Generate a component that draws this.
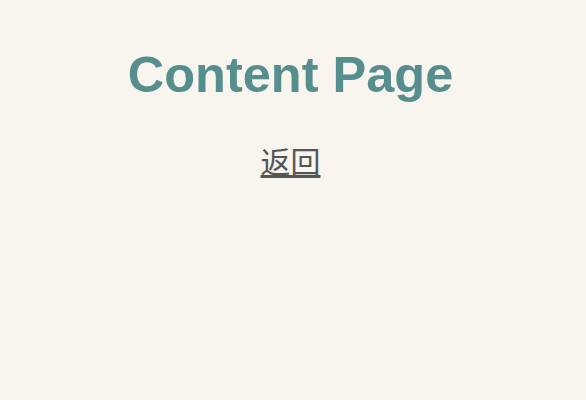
import React from 'react';

const App = () => {
  return (
    <div className="min-h-screen bg-[#f8f5ef] text-center pt-[46px] pr-[5px]" style={{ fontFamily: '"Liberation Sans", Arial, "Noto Sans CJK SC", sans-serif' }}>
      {/* Title */}
      <h1 className="text-[50.5px] font-bold leading-[1.15] text-[#568e8e]">Content Page</h1>
      <div className="mt-[42px]">
        <a href="#" className="text-[30px] leading-[1.15] text-[#555555] underline">返回</a>
      </div>
    </div>
  );
};

export default App;
